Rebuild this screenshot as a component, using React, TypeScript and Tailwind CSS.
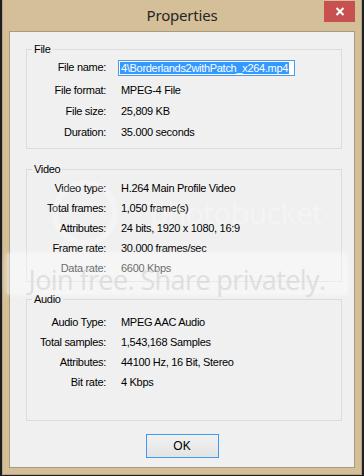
import React from "react";

const font = { fontFamily: '"Liberation Sans", Arial, sans-serif' };

function Row({ label, value, h = "h-[20px]" }: { label: string; value: React.ReactNode; h?: string }) {
  return (
    <div className={`flex items-center ${h}`}>
      <div className="w-[79px] shrink-0 text-right">{label}</div>
      <div className="ml-[15px] whitespace-nowrap">{value}</div>
    </div>
  );
}

function Group({ title, children, className = "" }: { title: string; children: React.ReactNode; className?: string }) {
  return (
    <fieldset className={`ml-[16px] mr-[12px] border border-[#dcdcdc] ${className}`}>
      <legend className="ml-[5px] px-[2px] leading-[13px]">{title}</legend>
      {children}
    </fieldset>
  );
}

export default function App() {
  return (
    <div
      className="relative w-[364px] h-[476px] bg-[#1e1f22] flex text-[11px] text-black tracking-[-0.3px] overflow-hidden"
      style={font}
    >
      <div className="mx-[2px] mb-[1px] flex-1 flex flex-col bg-[#d4bf99] border-x border-b border-[#b9a681] px-[6px] pb-[6px]">
        {/* title bar */}
        <div className="relative h-[31px] flex items-center justify-center">
          <span
            className="text-[15px] text-[#262626] tracking-[-0.2px] -mt-[1px]"
            style={{ fontFamily: '"Noto Sans", "Open Sans", sans-serif' }}
          >
            Properties
          </span>
          <div className="absolute right-0 top-[1px] w-[31px] h-[21px] bg-[#c75050] flex items-center justify-center">
            <svg width="10" height="9" viewBox="0 0 10 9">
              <path d="M1.5 1 L8.5 8 M8.5 1 L1.5 8" stroke="white" strokeWidth="2" />
            </svg>
          </div>
        </div>
        {/* client */}
        <div className="flex-1 flex flex-col bg-[#f0f0f0] border border-[#a99b7e]">
          <Group title="File" className="mt-[11px] pb-[6px]">
            <Row
              h="h-[23px]"
              label="File name:"
              value={
                <div className="-ml-[3px] w-[177px] h-[16px] border border-[#4a9be8] bg-white p-[1px] flex">
                  <span className="h-[12px] leading-[12px] bg-[#3399ff] text-white pl-[1px] pr-[1px] overflow-hidden whitespace-nowrap">
                    4\Borderlands2withPatch_x264.mp4
                  </span>
                </div>
              }
            />
            <Row h="h-[22px]" label="File format:" value="MPEG-4 File" />
            <Row h="h-[21px]" label="File size:" value="25,809 KB" />
            <Row h="h-[20px]" label="Duration:" value="35.000 seconds" />
          </Group>
          <Group title="Video" className="mt-[14px] pt-[2px] pb-[3px]">
            <Row label="Video type:" value="H.264 Main Profile Video" />
            <Row label="Total frames:" value="1,050 frame(s)" />
            <Row label="Attributes:" value="24 bits, 1920 x 1080, 16:9" />
            <Row label="Frame rate:" value="30.000 frames/sec" />
            <Row label="Data rate:" value="6600 Kbps" />
          </Group>
          <Group title="Audio" className="mt-[11px] pt-[6px] pb-[28px]">
            <Row label="Audio Type:" value="MPEG AAC Audio" />
            <Row label="Total samples:" value="1,543,168 Samples" />
            <Row label="Attributes:" value="44100 Hz, 16 Bit, Stereo" />
            <Row label="Bit rate:" value="4 Kbps" />
          </Group>
          <div className="flex justify-center mt-[13px]">
            <button className="w-[73px] h-[24px] border border-[#3c9cf2] bg-gradient-to-b from-[#f2f2f2] to-[#e3e3e3] text-[12px] tracking-normal">
              OK
            </button>
          </div>
        </div>
      </div>
      {/* photobucket watermark */}
      <div
        className="pointer-events-none absolute left-[150px] top-[190px] text-[30px] text-white opacity-30 tracking-[-0.5px]"
        style={{ fontFamily: '"Open Sans", sans-serif' }}
      >
        photobucket
      </div>
      <div className="pointer-events-none absolute left-[52px] top-[180px] w-[66px] h-[66px] rounded-full border-[6px] border-white opacity-25" />
      <div className="pointer-events-none absolute left-[7px] top-[254px] w-[340px] h-[40px] bg-white/40 shadow-[0_0_6px_rgba(255,255,255,0.6)] flex items-center justify-center">
        <span
          className="text-[27px] text-[#d0d0d0] opacity-60 tracking-[-0.6px] mt-[12px]"
          style={{ fontFamily: '"Open Sans", sans-serif' }}
        >
          Join free. Share privately.
        </span>
      </div>
    </div>
  );
}
